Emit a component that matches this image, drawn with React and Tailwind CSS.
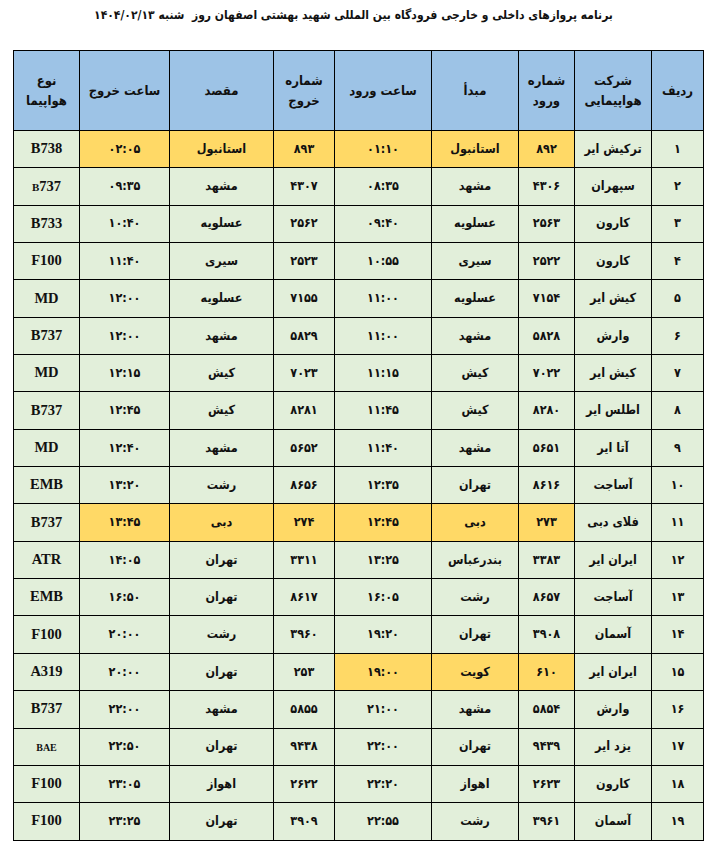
import React from "react";

const Y = "bg-[#ffd966]";

// each row: [no, airline, arrNo, origin, arrTime, depNo, dest, depTime, type, highlight cols]
const flights = [
  ["۱", "ترکیش ایر", "۸۹۲", "استانبول", "۰۱:۱۰", "۸۹۳", "استانبول", "۰۲:۰۵", "B738", [2, 3, 4, 5, 6, 7]],
  ["۲", "سپهران", "۴۳۰۶", "مشهد", "۰۸:۳۵", "۴۳۰۷", "مشهد", "۰۹:۳۵", "b737", []],
  ["۳", "کارون", "۲۵۶۳", "عسلویه", "۰۹:۴۰", "۲۵۶۲", "عسلویه", "۱۰:۴۰", "B733", []],
  ["۴", "کارون", "۲۵۲۲", "سیری", "۱۰:۵۵", "۲۵۲۳", "سیری", "۱۱:۴۰", "F100", []],
  ["۵", "کیش ایر", "۷۱۵۴", "عسلویه", "۱۱:۰۰", "۷۱۵۵", "عسلویه", "۱۲:۰۰", "MD", []],
  ["۶", "وارش", "۵۸۲۸", "مشهد", "۱۱:۰۰", "۵۸۲۹", "مشهد", "۱۲:۰۰", "B737", []],
  ["۷", "کیش ایر", "۷۰۲۲", "کیش", "۱۱:۱۵", "۷۰۲۳", "کیش", "۱۲:۱۵", "MD", []],
  ["۸", "اطلس ایر", "۸۲۸۰", "کیش", "۱۱:۴۵", "۸۲۸۱", "کیش", "۱۲:۴۵", "B737", []],
  ["۹", "آتا ایر", "۵۶۵۱", "مشهد", "۱۱:۴۰", "۵۶۵۲", "مشهد", "۱۲:۴۰", "MD", []],
  ["۱۰", "آساجت", "۸۶۱۶", "تهران", "۱۲:۳۵", "۸۶۵۶", "رشت", "۱۳:۲۰", "EMB", []],
  ["۱۱", "فلای دبی", "۲۷۳", "دبی", "۱۲:۴۵", "۲۷۴", "دبی", "۱۳:۴۵", "B737", [2, 3, 4, 5, 6, 7]],
  ["۱۲", "ایران ایر", "۳۳۸۳", "بندرعباس", "۱۳:۲۵", "۳۳۱۱", "تهران", "۱۴:۰۵", "ATR", []],
  ["۱۳", "آساجت", "۸۶۵۷", "رشت", "۱۶:۰۵", "۸۶۱۷", "تهران", "۱۶:۵۰", "EMB", []],
  ["۱۴", "آسمان", "۳۹۰۸", "تهران", "۱۹:۲۰", "۳۹۶۰", "رشت", "۲۰:۰۰", "F100", []],
  ["۱۵", "ایران ایر", "۶۱۰", "کویت", "۱۹:۰۰", "۲۵۳", "تهران", "۲۰:۰۰", "A319", [2, 3, 4]],
  ["۱۶", "وارش", "۵۸۵۴", "مشهد", "۲۱:۰۰", "۵۸۵۵", "مشهد", "۲۲:۰۰", "B737", []],
  ["۱۷", "یزد ایر", "۹۴۳۹", "تهران", "۲۲:۰۰", "۹۴۳۸", "تهران", "۲۲:۵۰", "BAE", []],
  ["۱۸", "کارون", "۲۶۲۳", "اهواز", "۲۲:۲۰", "۲۶۲۲", "اهواز", "۲۳:۰۵", "F100", []],
  ["۱۹", "آسمان", "۳۹۶۱", "رشت", "۲۲:۵۵", "۳۹۰۹", "تهران", "۲۳:۲۵", "F100", []],
];

const fa = { fontFamily: '"DejaVu Sans Condensed", "DejaVu Sans", sans-serif' };

const TypeCell = ({ t }) => {
  if (t === "b737")
    return (
      <span>
        <span className="text-[11px]">B</span>737
      </span>
    );
  if (t === "BAE") return <span className="text-[10px]">BAE</span>;
  return <span>{t}</span>;
};

export default function App() {
  return (
    <div className="w-[707px] bg-white text-[#111]" style={fa}>
      <div
        dir="rtl"
        className="pt-[6px] h-[50px] text-center text-[12px] font-bold"
      >
        برنامه پروازهای داخلی و خارجی فرودگاه بین المللی شهید بهشتی اصفهان روز&nbsp; شنبه ۱۴۰۴/۰۲/۱۳
      </div>
      <div className="pl-[13px]">
        <table
          dir="rtl"
          className="w-[690px] table-fixed border-collapse border-[1.5px] border-black"
        >
          <colgroup>
            <col className="w-[52px]" />
            <col className="w-[77px]" />
            <col className="w-[56px]" />
            <col className="w-[87px]" />
            <col className="w-[97px]" />
            <col className="w-[61px]" />
            <col className="w-[104px]" />
            <col className="w-[90px]" />
            <col className="w-[66px]" />
          </colgroup>
          <thead>
            <tr className="h-[80px] bg-[#9dc3e6] text-[13px] font-bold leading-[20px]">
              <th className="border-[1.5px] border-black font-bold">ردیف</th>
              <th className="border-[1.5px] border-black font-bold">
                شرکت
                <br />
                هواپیمایی
              </th>
              <th className="border-[1.5px] border-black font-bold">
                شماره
                <br />
                ورود
              </th>
              <th className="border-[1.5px] border-black font-bold">مبدأ</th>
              <th className="border-[1.5px] border-black font-bold">ساعت ورود</th>
              <th className="border-[1.5px] border-black font-bold">
                شماره
                <br />
                خروج
              </th>
              <th className="border-[1.5px] border-black font-bold">مقصد</th>
              <th className="border-[1.5px] border-black font-bold">ساعت خروج</th>
              <th className="border-[1.5px] border-black font-bold">
                نوع
                <br />
                هواپیما
              </th>
            </tr>
          </thead>
          <tbody>
            {flights.map((r) => {
              const hl = r[9];
              return (
                <tr key={r[0]} className="h-[37.35px] bg-[#e2efda] text-[12.5px] font-bold">
                  {r.slice(0, 8).map((c, i) => (
                    <td
                      key={i}
                      className={
                        "border-[1.5px] border-black text-center align-middle " +
                        (hl.includes(i) ? Y : "")
                      }
                    >
                      {c}
                    </td>
                  ))}
                  <td
                    className="border-[1.5px] border-black text-center align-middle text-[14.5px] font-bold"
                    style={{ fontFamily: '"Liberation Serif", serif' }}
                  >
                    <TypeCell t={r[8]} />
                  </td>
                </tr>
              );
            })}
          </tbody>
        </table>
      </div>
    </div>
  );
}
